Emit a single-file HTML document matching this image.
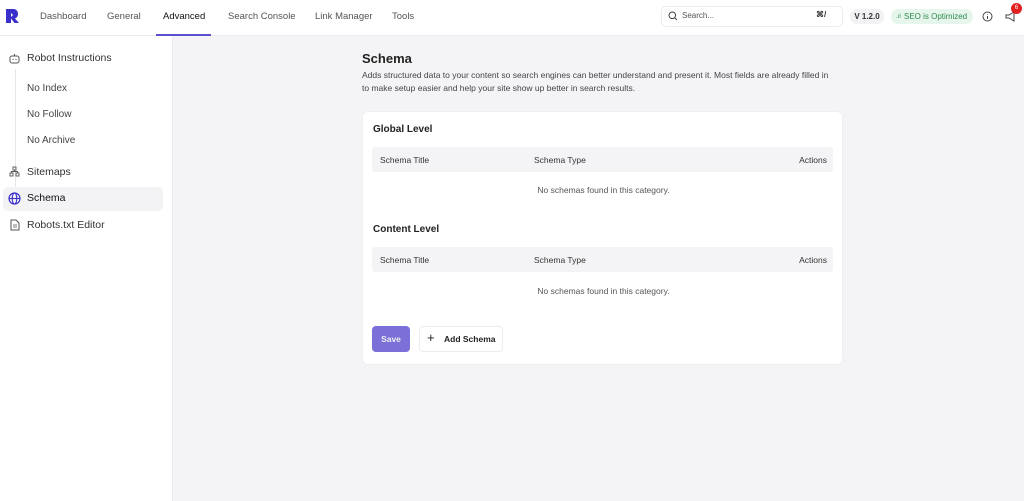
<!DOCTYPE html><html><head><style>
*{box-sizing:border-box;margin:0;padding:0}
body{width:1024px;height:501px;overflow:hidden;font-family:"Liberation Sans",sans-serif;background:#f4f4f7;color:#1f1f2b;position:relative}
.hdr{position:absolute;left:0;top:0;width:1024px;height:36px;background:#fff;border-bottom:1px solid #ececf0}
.nav{position:absolute;top:11px;font-size:9.5px;color:#555}
.side{position:absolute;left:0;top:36px;width:173px;height:465px;background:#fff;border-right:1px solid #ececf0}
.si{position:absolute;font-size:10.5px;color:#333;left:27px}
.sub{position:absolute;left:27px;font-size:10px;color:#444}
.card{position:absolute;left:362px;top:111px;width:481px;height:254px;background:#fff;border-radius:6px;border:1px solid #efeff2}
.th{position:absolute;left:9px;width:461px;height:25px;background:#f4f4f6;border-radius:3px;font-size:8.5px;color:#333}
.th span{position:absolute;top:8px}
.empty{position:absolute;width:481px;text-align:center;font-size:8.5px;color:#555}
.h3{position:absolute;left:10px;font-size:10px;font-weight:bold;color:#222}
</style></head><body>
<div class="hdr">
<svg style="position:absolute;left:5px;top:8px" width="15" height="16" viewBox="0 0 15 16"><path d="M1 1h8a5 5 0 0 1 1 9.5L14 15H9.5L6 10.5V15H1z" fill="#3b2fc9"/><path d="M6 5l2 2-2 2" fill="#fff"/></svg>
<div class="nav" style="left:40px">Dashboard</div>
<div class="nav" style="left:107px">General</div>
<div class="nav" style="left:163px;color:#111">Advanced</div>
<div style="position:absolute;left:156px;top:34px;width:55px;height:2px;background:#5a4fcf"></div>
<div class="nav" style="left:228px">Search Console</div>
<div class="nav" style="left:315px">Link Manager</div>
<div class="nav" style="left:392px">Tools</div>
<div style="position:absolute;left:661px;top:6px;width:182px;height:21px;border:1px solid #ececf0;border-radius:5px"></div>
<svg style="position:absolute;left:668px;top:11px" width="10" height="10" viewBox="0 0 10 10"><circle cx="4.3" cy="4.3" r="3.3" fill="none" stroke="#444" stroke-width="1"/><path d="M6.8 6.8L9 9" stroke="#444"/></svg>
<div style="position:absolute;left:682px;top:11px;font-size:8px;color:#555">Search...</div>
<div style="position:absolute;left:816px;top:10px;font-size:8px;color:#333;font-weight:bold">⌘/</div>
<div style="position:absolute;left:850px;top:9px;width:34px;height:15px;background:#f2f2f5;border-radius:7px;font-size:8px;text-align:center;line-height:15px;color:#333;font-weight:bold">V 1.2.0</div>
<div style="position:absolute;left:891px;top:9px;width:82px;height:15px;background:#e7f6ec;border-radius:7px;font-size:8px;line-height:15px;color:#2d8a4e;padding-left:13px">SEO is Optimized</div>
<div style="position:absolute;left:896px;top:14px;font-size:6px;color:#2d8a4e">.ıl</div>
<svg style="position:absolute;left:982px;top:11px" width="11" height="11" viewBox="0 0 11 11"><circle cx="5.5" cy="5.5" r="4.5" fill="none" stroke="#444"/><path d="M5.5 5v3M5.5 3.2v.6" stroke="#444"/></svg>
<svg style="position:absolute;left:1005px;top:11px" width="11" height="11" viewBox="0 0 11 11"><path d="M1 4h3l5-3v9L4 7H1z" fill="none" stroke="#444"/></svg>
<div style="position:absolute;left:1011px;top:3px;width:11px;height:11px;border-radius:50%;background:#e02020;color:#fff;font-size:6px;text-align:center;line-height:11px">6</div>
</div>
<div class="side">
<svg style="position:absolute;left:9px;top:17px" width="11" height="11" viewBox="0 0 11 11"><rect x="1" y="3" width="9" height="7" rx="2" fill="none" stroke="#555"/><path d="M5.5 1v2" stroke="#555"/><circle cx="4" cy="6.5" r=".6" fill="#555"/><circle cx="7" cy="6.5" r=".6" fill="#555"/></svg>
<div class="si" style="top:16px">Robot Instructions</div>
<div style="position:absolute;left:15px;top:33px;width:1px;height:120px;background:#e6e6ea"></div>
<div class="sub" style="top:47px">No Index</div>
<div class="sub" style="top:73px">No Follow</div>
<div class="sub" style="top:99px">No Archive</div>
<svg style="position:absolute;left:9px;top:130px" width="11" height="11" viewBox="0 0 11 11"><rect x="4" y="1" width="3" height="3" fill="none" stroke="#555" stroke-width=".9"/><rect x="1" y="7" width="3" height="3" fill="none" stroke="#555" stroke-width=".9"/><rect x="7" y="7" width="3" height="3" fill="none" stroke="#555" stroke-width=".9"/><path d="M5.5 4v1.5M2.5 7V5.5h6V7" fill="none" stroke="#555" stroke-width=".9"/></svg>
<div class="si" style="top:130px">Sitemaps</div>
<div style="position:absolute;left:3px;top:151px;width:160px;height:24px;background:#f3f3f6;border-radius:5px"></div>
<svg style="position:absolute;left:8px;top:156px" width="13" height="13" viewBox="0 0 13 13"><circle cx="6.5" cy="6.5" r="5.5" fill="none" stroke="#3b2fc9" stroke-width="1.2"/><ellipse cx="6.5" cy="6.5" rx="2.3" ry="5.5" fill="none" stroke="#3b2fc9" stroke-width="1.1"/><path d="M1 6.5h11" stroke="#3b2fc9" stroke-width="1.1"/></svg>
<div class="si" style="top:156px;color:#111">Schema</div>
<svg style="position:absolute;left:9px;top:183px" width="11" height="12" viewBox="0 0 11 12"><path d="M2 1h5l3 3v7H2z" fill="none" stroke="#555"/><path d="M4 6h4M4 8h4" stroke="#555" stroke-width=".8"/></svg>
<div class="si" style="top:183px">Robots.txt Editor</div>
</div>
<div style="position:absolute;left:362px;top:51px;font-size:13px;font-weight:bold;color:#222">Schema</div>
<div style="position:absolute;left:362px;top:69px;width:470px;font-size:8.5px;line-height:12.5px;color:#444">Adds structured data to your content so search engines can better understand and present it. Most fields are already filled in to make setup easier and help your site show up better in search results.</div>
<div class="card">
<div class="h3" style="top:12px">Global Level</div>
<div class="th" style="top:35px"><span style="left:8px">Schema Title</span><span style="left:162px">Schema Type</span><span style="right:6px">Actions</span></div>
<div class="empty" style="top:73px">No schemas found in this category.</div>
<div class="h3" style="top:112px">Content Level</div>
<div class="th" style="top:135px"><span style="left:8px">Schema Title</span><span style="left:162px">Schema Type</span><span style="right:6px">Actions</span></div>
<div class="empty" style="top:174px">No schemas found in this category.</div>
<div style="position:absolute;left:9px;top:214px;width:38px;height:26px;background:#7b6fd8;border-radius:4px;color:#eee;font-size:8.5px;font-weight:bold;text-align:center;line-height:26px">Save</div>
<div style="position:absolute;left:56px;top:214px;width:84px;height:26px;border:1px solid #ececf0;border-radius:4px;font-size:8.5px;font-weight:bold;line-height:24px;padding-left:24px;color:#222">Add Schema</div>
<div style="position:absolute;left:64px;top:218px;font-size:13px;color:#222">+</div>
</div>
</body></html>
